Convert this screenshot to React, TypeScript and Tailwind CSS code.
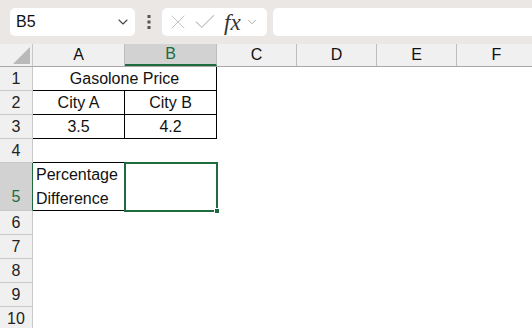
import { ChevronDown, X, Check } from 'lucide-react'

const cols = [
  { key: 'A', w: 'w-[92px]' },
  { key: 'B', w: 'w-[92px]' },
  { key: 'C', w: 'w-[80px]' },
  { key: 'D', w: 'w-[80px]' },
  { key: 'E', w: 'w-[80px]' },
  { key: 'F', w: 'w-[80px]' },
]

function RowHead({ n, tall, active }: { n: number; tall?: boolean; active?: boolean }) {
  return (
    <div
      className={`w-[33px] shrink-0 flex justify-center border-r border-b border-[#c8c8c8] ${
        tall ? 'h-[48px] items-end pb-[1px]' : 'h-[24px] items-center'
      } ${active ? 'bg-[#d2d2d2] text-[#1e6b3f] border-r-[#1e6b3f]' : 'bg-[#f0f0f0] text-[#222]'}`}
    >
      {n}
    </div>
  )
}

export default function App() {
  const cell = 'shrink-0 flex items-center justify-center'
  return (
    <div className="w-[532px] h-[328px] overflow-hidden bg-white text-[16px] font-['Liberation_Sans',Arial,sans-serif] text-[#111]">
      {/* formula bar */}
      <div className="h-[44px] bg-[#ebe7e5] flex items-center pl-[10px]">
        <div className="w-[125px] h-[28px] bg-white rounded-[5px] flex items-center justify-between pl-[6px] pr-[4px]">
          <span className="text-[16px]">B5</span>
          <ChevronDown size={16} strokeWidth={1.6} className="text-[#444]" />
        </div>
        <div className="w-[27px] flex justify-center">
          <svg width="4" height="14" viewBox="0 0 4 14">
            <rect x="0.5" y="0" width="3" height="3" fill="#555" />
            <rect x="0.5" y="5.5" width="3" height="3" fill="#555" />
            <rect x="0.5" y="11" width="3" height="3" fill="#555" />
          </svg>
        </div>
        <div className="w-[105px] h-[28px] bg-white rounded-[5px] flex items-center pl-[4px]">
          <X size={24} strokeWidth={1} className="text-[#c4c4c4]" />
          <Check size={26} strokeWidth={1} className="text-[#c4c4c4] ml-[2px]" />
          <span className="ml-[6px] text-[23px] italic font-['Liberation_Serif',serif] text-[#333] leading-none">fx</span>
          <ChevronDown size={14} strokeWidth={1.4} className="text-[#999] ml-[4px]" />
        </div>
        <div className="ml-[6px] flex-1 h-[28px] bg-white rounded-l-[5px]" />
      </div>

      {/* column header */}
      <div className="flex h-[23px] bg-[#f0f0f0] border-b border-[#a8a8a8]">
        <div className="w-[33px] shrink-0 border-r border-[#c8c8c8] relative">
          <svg className="absolute left-[13px] top-[3px]" width="17" height="17" viewBox="0 0 17 17">
            <polygon points="17,0 17,17 0,17" fill="#b9b9b9" />
          </svg>
        </div>
        {cols.map((c) => (
          <div
            key={c.key}
            className={`${c.w} ${cell} border-r border-[#bdbdbd] ${
              c.key === 'B' ? 'bg-[#d2d2d2] text-[#1e6b3f] border-b-2 border-b-[#1e6b3f]' : 'text-[#111]'
            }`}
          >
            {c.key}
          </div>
        ))}
      </div>

      {/* row 1 */}
      <div className="flex">
        <RowHead n={1} />
        <div className={`w-[184px] h-[24px] ${cell} border-r border-b border-black`}>Gasolone Price</div>
      </div>
      {/* row 2 */}
      <div className="flex">
        <RowHead n={2} />
        <div className={`w-[92px] h-[24px] ${cell} border-r border-b border-black`}>City A</div>
        <div className={`w-[92px] h-[24px] ${cell} border-r border-b border-black`}>City B</div>
      </div>
      {/* row 3 */}
      <div className="flex">
        <RowHead n={3} />
        <div className={`w-[92px] h-[24px] ${cell} border-r border-b border-black`}>3.5</div>
        <div className={`w-[92px] h-[24px] ${cell} border-r border-b border-black`}>4.2</div>
      </div>
      {/* row 4 */}
      <div className="flex">
        <RowHead n={4} />
        <div className="w-[92px] h-[24px] shrink-0 border-b border-black" />
      </div>
      {/* row 5 */}
      <div className="flex">
        <RowHead n={5} tall active />
        <div className="w-[92px] h-[48px] shrink-0 border-b border-black flex flex-col justify-center pl-[3px] leading-[24px]">
          <span>Percentage</span>
          <span>Difference</span>
        </div>
        <div className="w-[92px] h-[48px] shrink-0 relative">
          <div className="absolute -left-[1px] -top-[1px] w-[94px] h-[50px] border-2 border-[#1e6b3f]" />
          <div className="absolute left-[89px] top-[45px] w-[6px] h-[6px] bg-[#1e6b3f] border border-white" />
        </div>
      </div>
      {[6, 7, 8, 9, 10].map((n) => (
        <div key={n} className="flex">
          <RowHead n={n} />
        </div>
      ))}
    </div>
  )
}
